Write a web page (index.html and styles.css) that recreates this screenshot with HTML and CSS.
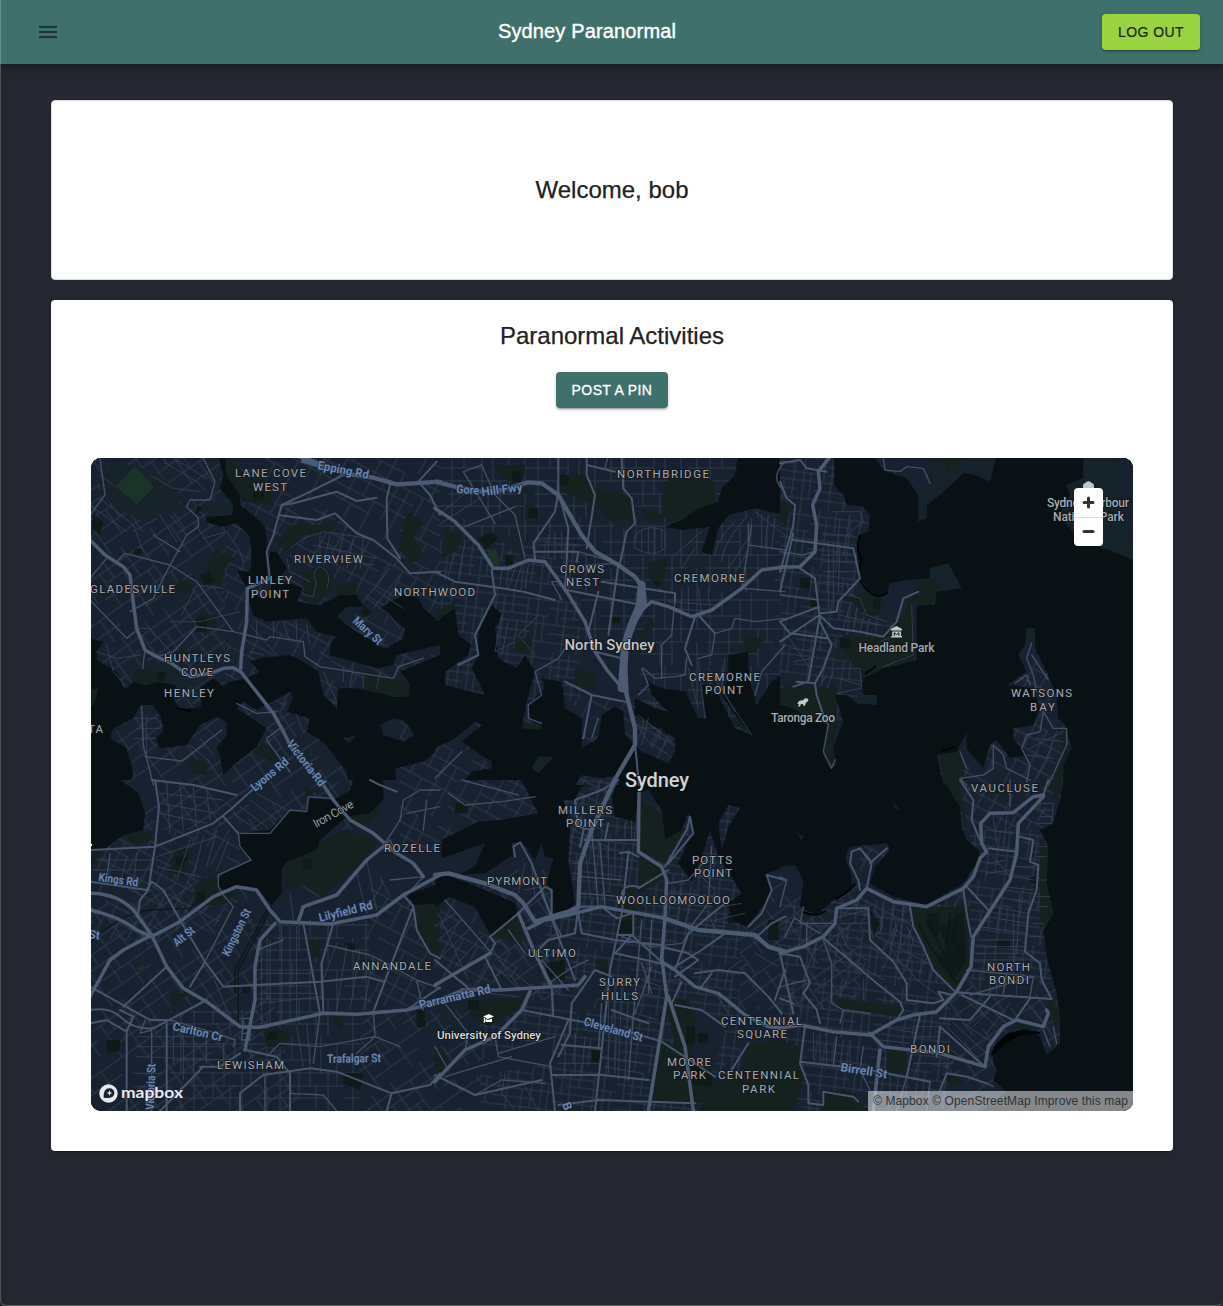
FILE: index.html
```html
<!DOCTYPE html>
<html lang="en">
<head>
<meta charset="utf-8">
<title>Sydney Paranormal</title>
<link rel="stylesheet" href="styles.css">
</head>
<body>
<div class="app">
  <header class="bar">
    <button class="menu" aria-label="menu"><svg width="24" height="24" viewBox="0 0 24 24"><path d="M3 18h18v-2H3v2zm0-5h18v-2H3v2zm0-7v2h18V6H3z"/></svg></button>
    <div class="title">Sydney Paranormal</div>
    <button class="btn logout">LOG OUT</button>
  </header>
  <main class="content">
    <section class="card welcome"><h1>Welcome, bob</h1></section>
    <section class="card activities">
      <h1>Paranormal Activities</h1>
      <button class="btn post">POST A PIN</button>
      <div class="map">
        <svg class="tiles" width="1042" height="653" viewBox="91 458 1042 653">
          <defs>
            <pattern id="grid-a" width="86" height="74" patternUnits="userSpaceOnUse"><path class="st" d="M0 8H86M0 24H52M0 37H86M18 50H86M0 62H70M9 0V37M22 8V74M34 0V24M41 37V62M52 8V50M63 0V37M70 37V74M79 8V50M9 50V74M58 50V74"/></pattern>
            <pattern id="grid-b" width="86" height="74" patternUnits="userSpaceOnUse" patternTransform="rotate(28)"><path class="st" d="M0 6H64M0 19H86M22 31H86M0 45H86M0 58H50M12 0V19M6 19V45M22 19V58M37 6V45M50 0V31M50 45V74M64 6V58M76 19V74M30 58V74"/></pattern>
            <pattern id="grid-c" width="86" height="74" patternUnits="userSpaceOnUse" patternTransform="rotate(-35)"><path class="st" d="M0 10H86M12 21H86M0 34H60M0 48H86M30 62H86M10 10V48M20 0V21M31 21V74M43 0V34M52 34V62M60 10V48M70 48V74M78 0V34"/></pattern>
            <pattern id="grid-d" width="62" height="58" patternUnits="userSpaceOnUse" patternTransform="rotate(7)"><path class="st" d="M0 7H62M0 15H40M12 23H62M0 31H62M0 40H44M0 49H62M8 0V31M16 7V58M25 0V23M31 31V58M40 7V49M50 0V58M57 23V49"/></pattern>
            <clipPath id="land">
              <path transform="translate(90 455) scale(.33333)" d="M0 0H385L400 60 390 100 430 150 425 180 345 185 350 202 395 215 440 205 480 245 485 300 480 350 440 345 470 400 470 420 490 480 530 500 650 490 680 530 740 545 720 570 720 600 860 640 910 630 920 600 1050 570V600L1000 620 930 650 960 685 955 725 910 725 850 710 800 700 745 700 740 760 700 720 685 650 640 620 600 600 510 610 480 620 510 650 470 670 420 680 400 695 370 670 330 700 335 755 270 765 250 730 260 690 200 680 170 690 130 680 110 700 100 695 80 650 20 615 20 590 40 560 0 550zM405 0H1050V500L1000 460 985 430 940 420 910 435 870 460 945 520 940 550 885 582 800 530 740 485 770 455 820 455 800 420 750 420 690 450 620 440 640 400 600 385 560 380 590 340 560 290 540 290 535 330 545 380 540 420 510 430 485 400 530 370 530 250 525 215 500 190 450 150 450 120 410 60zM150 750H190L215 790 220 830 195 850 210 880 290 870 330 810 380 785 410 800 410 840 380 880 390 900 400 960 430 930 500 875 530 820 440 760 460 740 500 765 600 710 610 730 590 770 660 790 650 830 700 860 770 950 775 990H120L130 950 110 880 60 850 70 820 130 790zM870 810L910 790 940 795 975 840 940 860 880 840zM760 850L800 840 780 865zM920 990L915 940 1000 920 1050 880V990zM0 705L25 700 10 750 0 755z"/>
              <path transform="translate(435 455) scale(.33333)" d="M0 0H910L900 60 860 100 850 140 790 160 740 195 690 215 740 225 825 215 800 290 830 300 850 220 880 180 960 160 1050 180V650L1010 680 965 750 950 700 940 640 940 590 880 600 880 670 860 720 900 780 950 840 900 820 850 720 830 690 800 690 815 790 790 790 750 710 680 700 640 680 650 720 700 770 660 760 600 730 600 780 720 850 720 890 700 925 620 890 570 840 565 770 540 755 500 780 490 850 440 880 440 790 390 760 380 680 320 670 330 700 280 750 290 800 320 810 315 825 260 820 275 740 300 650 270 600 245 640 190 610 180 520 200 480 170 450 130 530 130 600 110 640 150 720 30 690 30 650 100 600 110 570 70 540 60 460 0 500zM0 880L60 850 120 800 140 810 80 860 170 920 170 940 110 950 80 990H0zM290 940L310 905 355 905 310 955zM420 990L440 960 500 970 550 960V990z"/>
              <path transform="translate(780 455) scale(.33333)" d="M0 0H160L165 60 160 90 190 120 200 150 250 155 270 180 265 230 235 240 230 290 240 370 260 400 290 425 320 420 330 385 380 375 450 370 450 340 505 325 545 400 470 410 465 450 410 450 410 615 310 640 250 670 245 690 250 720 290 720 290 750 230 745 200 720 165 720 190 800 160 880 170 930 150 940 130 900 140 810 70 780 40 760 0 750zM280 0H650L630 80 590 60 550 55 480 120 440 150 440 190 415 200 415 120 380 70 310 45zM910 0H1060V315L960 275 900 250 860 210 840 180 870 120 860 90 910 70zM740 520L765 520 765 580 800 650 830 720 835 790 855 810 875 880 850 930 850 990H490L470 900 530 890 560 830 560 880 610 940 630 870 650 855 690 910 740 900 700 850 700 820 760 810 780 760 760 700 680 690 740 650 715 600 735 570z"/>
              <path transform="translate(90 780) scale(.33333)" d="M90 0H790L780 30 730 60 660 55 650 95 600 90 540 150 450 160 445 200 480 240 400 280 380 300 395 330 450 318 500 325 545 375 575 340 575 270 590 245 680 210 690 180 770 110 840 100 880 60 880 0H1036V315L950 345 975 375 1036 372V993H0V210L40 210 100 165 160 150 165 100 145 40z"/>
              <path transform="translate(435 780) scale(.33333)" d="M0 0H260L310 100 200 120 130 125 20 180 20 235 150 190 120 260 80 280 60 295 150 330 240 370 250 400 170 470 120 380 40 350 0 385V993H1040V265L995 280 1010 330 990 370 935 440 890 420 880 370 920 340 850 230 825 150 800 230 770 305 730 250 775 150 760 100 740 150 690 180 680 90 640 30 610 40 600 125 540 110 530 50 550 0 440 20 420 60 385 60 405 140 400 240 420 370 400 390 350 400 350 330 335 310 355 235 330 230 320 190 300 240 260 185 230 190 240 220 150 280 60 285 0 290zM850 130L880 75 915 85 880 140 860 210z"/>
              <path transform="translate(780 780) scale(.33333)" d="M0 260L45 255 70 300 60 380 110 405 160 360 215 330 215 290 195 230 210 200 320 190 330 210 285 260 270 310 340 350 440 375 550 310 590 250 600 215 560 180 545 140 540 80 490 0H850L840 60 820 130 780 150 805 200 800 310 820 400 790 450 800 530 830 640 840 720 840 790 800 825 780 770 740 745 680 760 640 800 640 850 650 870 640 900 680 935 600 993H0zM340 65L360 90 345 85zM50 155L70 170 65 185z"/>
            </clipPath>
          </defs>

          <rect class="water" x="91" y="458" width="1042" height="653"/>
          <g clip-path="url(#land)">
            <rect class="ground" x="91" y="458" width="1042" height="653"/>
            <path fill="url(#grid-c)" d="M91 458H225V705H91zM91 700H360V830H91zM240 870L300 1111H91V900z"/>
            <path fill="url(#grid-b)" d="M225 458H440V705H225zM91 830H240V900L200 940H91zM370 880H480L520 975 400 1010 360 1000zM400 700H620V850H400zM590 700H680V780H590z"/>
            <path fill="url(#grid-a)" d="M440 458H600V540H440zM255 920H370V1010H255zM170 1010H360V1111H170zM580 458H780V640H580zM640 620H780V745H640z"/>
            <path fill="url(#grid-d)" d="M440 540H580V700H440zM780 458H900V720H780zM560 780H740V1111H480V1010L540 990zM780 900H950V1111H780zM970 830H1060V980H970z"/>
            <path fill="url(#grid-c)" d="M360 1010H480V1111H360zM480 870H560V1000H500zM740 880H860V1010H740zM950 980H1065V1111H940z"/>
            <path fill="url(#grid-b)" d="M940 660H1080V830H940zM860 840H970V980H860z"/>
            <!-- bushland, reserves and parks -->
            <g transform="translate(90 455) scale(.33333)">
              <path class="heath" d="M30 60L80 20 200 50 240 90 280 130 240 170 150 195 100 170 30 120zM350 140L430 140 440 200 350 190zM160 620L240 620 330 690 260 700 180 690z"/>
              <path class="park" d="M410 10L470 60 540 80 550 150 460 140 420 80zM375 285L435 310 400 340 400 385 340 395 345 350zM270 370L310 390 290 420 255 400zM600 210L700 210 750 190 720 230 640 240 600 290 560 270zM950 170L1000 200 970 250 1000 300 960 330 930 280zM640 350L700 330 740 380 690 440 640 440zM740 385L800 380 800 420 740 420zM270 580L310 600 240 630zM820 650L960 680 955 725 820 710zM130 640L200 650 190 690 130 680zM520 860L570 910 540 920 490 890zM300 910L350 920 350 960 300 950zM0 700H30V750H0zM320 480L375 480 375 520 320 500z"/>
              <path class="grass" d="M76 95L135 35 160 60 192 95 168 120 142 147 120 128z"/>
              <path class="wood" d="M10 180L40 200 30 240 5 220zM330 360L360 345 370 380 340 390zM140 280L160 285 150 300 130 295zM820 450L845 470 830 485 815 475zM490 110H520V135H490zM320 150L340 165 320 175zM200 650L230 650 220 680 200 675zM320 490H350V530H320z"/>
            </g>
            <g transform="translate(435 455) scale(.33333)">
              <path class="heath" d="M530 130H600V220H540zM200 250L260 230 270 310 210 270zM290 940L310 905 355 905 310 955z"/>
              <path class="park" d="M380 60H440L480 100 590 120 590 190 530 200 480 150 380 110zM690 80L780 50 840 80 840 140 780 180 700 200 680 150zM620 160L680 180 690 210 640 190zM640 320L700 310 680 400 640 370zM270 150H300V190H270zM170 30L270 30 270 60 220 80zM240 550H290V590H240zM420 640L480 660 480 710 420 690zM30 220L90 250 60 290 20 310zM260 810L320 800 320 825 260 825zM160 640L200 650 190 680 160 670zM0 470L60 440 60 480 0 510zM920 780L960 840 900 810zM930 540L990 550 960 590 920 600zM610 540L650 490 660 510 620 560z"/>
              <path class="grass" d="M150 300L180 280 195 320 190 335 170 330z"/>
              <path class="wood" d="M210 300H235V330H210zM655 375L680 385 665 400zM530 485H555V505H530zM130 250L170 230 190 250 150 285zM230 50H260V80H230zM370 60H400V90H370zM280 160H310V190H280z"/>
            </g>
            <g transform="translate(780 455) scale(.33333)">
              <path class="heath" d="M440 10H650L630 80 590 60 550 55 480 120 440 150 440 190 415 200 415 120 440 90zM450 340L505 325 545 400 470 410 465 450 410 450 450 380zM160 580L250 580 250 630 160 610zM240 690L300 720 290 750 230 740zM840 0H1015L1040 160 1060 260V315L900 250 840 180zM735 520H770V570H735z"/>
              <path class="park" d="M410 380L460 370 480 400 450 450 400 440 400 610 310 640 250 670 180 570 190 540 300 550 370 480zM0 700L40 690 120 700 170 690 170 790 160 900 190 940 130 940 120 800 0 760zM200 430L260 410 310 430 300 480 270 490zM480 880L560 820 540 890 560 990H490zM830 800L870 880 840 990 820 970 850 900zM490 10H550L500 55zM0 130L30 160 20 210 0 200z"/>
              <path class="residential" d="M1020 0H1060V260L1020 200zM300 10H455V85L380 50 310 45zM320 385L400 375 340 500 300 490z"/>
              <path class="wood" d="M60 370H90V400H60zM90 440L115 430V455H90zM180 550H210V580H180zM280 430H300V460H280z"/>
            </g>
            <g transform="translate(90 780) scale(.33333)">
              <path class="park" d="M250 210L310 205 280 285 240 280zM390 290L450 320 410 370 320 380 310 340 330 300zM590 250L690 190 760 150 860 180 830 240 750 300 700 350 640 310 580 330zM100 165L160 150 200 180 130 190zM660 480L690 480V530H655zM980 370H1050V530L1010 510 980 440zM520 750L560 740 600 770 570 800 530 800zM240 640L300 640 250 680zM720 700L760 715 750 750zM640 20L680 30 650 50zM770 110L830 100 870 60 870 100 830 130 780 140zM0 220L40 210 20 250 0 260z"/>
              <path class="wood" d="M255 230L290 230 280 260 260 265zM640 240L665 235V265L640 270zM320 340L345 335V365L320 370zM760 880L820 880 810 930 760 910zM535 755H560V780H530zM50 780H90V815H50zM980 690H1005V740H980zM460 620H480V640H455zM770 490H795V510H770z"/>
              <path class="grass" d="M140 565L160 555 160 575z"/>
            </g>
            <g transform="translate(435 780) scale(.33333)">
              <path class="heath" d="M0 640L60 700 90 760 20 720zM630 35L650 80 660 120 630 140z"/>
              <path class="residential" d="M150 190L130 240 40 240 20 235zM440 600L490 570 500 640 440 720 420 690zM740 680L850 710 870 760 830 880 780 870 740 780zM190 820L350 770 350 850 50 900 40 880z"/>
              <path class="park" d="M610 60L650 80 690 110 690 180 750 140 690 250 610 210zM610 230L690 270 680 300 610 340zM555 320H600V460H550zM690 650L760 660 780 700 770 850 830 870 850 910 800 970 640 960 680 780 720 800zM940 790L1050 780V993H790L830 930 920 870zM380 0H430L400 60zM0 800L40 830 20 880 0 870zM200 440L260 460 260 500 220 480zM480 540H520V600L490 570zM170 460L250 400 260 440 200 480zM140 660L270 650 250 690 160 740 100 700z"/>
              <path class="wood" d="M60 70H95V100H60zM550 420H590V460H550zM330 550L390 540 390 600 340 600zM790 760H820V790H790zM880 400H900V430H880zM760 840L830 880 830 920 770 910zM100 660H130V690H100zM470 810H500V850H470z"/>
              <path class="wood" d="M755 740H780V790H755zM1000 420H1030V480H1000z"/>
            </g>
            <g transform="translate(780 780) scale(.33333)">
              <path class="park" d="M395 380L560 380 570 560 520 640 460 570 430 490 395 430zM160 650L280 670 370 680 360 710 170 680zM320 810H380V870L320 890zM0 780L60 800 70 900 40 993H0zM130 930L220 940 260 993H120zM810 640L840 700 830 740 800 700zM490 0H540L560 140 540 80zM800 0H850L830 60zM430 340L480 330 500 370 430 380zM780 180L805 200 820 400 780 450zM640 800L720 730 780 740 700 750zM500 880L550 890 540 920 500 910zM660 0L690 50 640 40z"/>
              <path class="wood" d="M440 400H480L470 470 440 440zM270 390L300 430 280 470zM480 450L550 390 560 540 520 600 470 540 500 500zM650 480H690V505H650zM750 290H770V310H750z"/>
              <path class="grass" d="M750 85L785 55 780 95z"/>
              <path class="sweep" d="M415 430L450 500 500 560 530 610M440 420L480 500 520 570M460 470L490 430M510 400L500 500 540 570M530 400L520 480 555 540"/>
            </g>
          </g>

          <!-- beaches and foreshore -->
          <g class="shore">
            <path d="M861 535Q854 546 862 559Q854 578 867 590Q878 601 888 592"/>
            <path class="bay" d="M992 1055Q1003 1026 1040 1033Q1013 1030 992 1055z"/>
            <path d="M942 751L955 747M836 899Q850 892 855 883M803 912Q815 918 826 911M865 674L876 666M176 708L191 711"/>
          </g>

          <!-- roads, west -->
          <g class="roads" transform="translate(90 455) scale(.33333)">
            <path class="st" d="M240 500L330 500 450 470M275 480L320 390 400 400M140 520L180 520 240 590M20 590L80 610 150 600M50 570L70 650 105 690M480 510L560 600M500 550V500M550 500V550M580 500L600 560M620 505V555M650 510L660 570M480 590L520 600M690 590L720 610M700 650L740 740M760 640V680M790 640L780 690M820 660V700M870 650L860 700M600 280L640 250 700 230 770 240 830 250M590 310L600 350 660 380M640 400Q620 420 670 425L680 380Q660 350 690 335 730 350 710 400M690 240V310M720 240L700 330M760 240L740 330M790 250L770 340M820 250L810 340M670 270L860 310M670 300L850 330M820 440L900 340M850 460L930 360M830 430L900 480 930 520M850 400L940 460M130 790H200M140 820H210M130 850H200M170 780V900M300 870L360 920M330 850L370 900M350 820L390 860M590 740L570 770M620 780L640 830M0 150L110 230M30 130L130 210 160 290M180 60L250 100 330 110M220 20L320 80 350 110M250 10L350 70M70 90L30 60M340 250L410 230 450 290 460 320M240 180L290 240M210 180L260 260M130 230L200 190"/>
            <path class="r3" d="M30 10L45 120 0 180M340 10L375 80 360 135 300 135 290 155 325 190 325 215 290 240 230 350 190 430 120 470M190 240L270 290M105 295L240 330 320 380 430 530 320 515 250 590 200 605M430 530L530 555 540 545 640 560 645 605 690 635 910 670 925 635 1000 610M0 435L110 550 135 530M0 370L50 310M165 585L158 640M155 755L160 870 190 990M165 905L275 918 395 825M530 850L570 820M530 855L600 950M440 745L500 775 560 770M105 295L80 320 40 300"/>
            <path class="r2" d="M540 370L530 290 550 240 575 150 650 115 760 60M575 150L610 145 740 110 800 138 860 128M565 180L680 195 735 175 800 235 850 255 920 310 960 355 1050 350M900 90L890 130 892 250 930 310M1050 180L1020 120 985 80 1040 20"/>
            <path class="r1" d="M0 255L45 300 100 335 120 360 132 460 140 520 165 585 200 605 245 625 300 665 360 655 400 640 430 638 452 650 550 775 575 820 605 880 700 990"/>
            <path class="r1 motorway" d="M630 5L700 30 760 55 850 68 920 88 970 85 1050 80M640 18L730 45"/>
            <path class="r1" d="M452 640L455 590 470 500 472 400 540 370"/>
          </g>
          <!-- roads, north -->
          <g class="roads" transform="translate(435 455) scale(.33333)">
            <path class="st" d="M600 240Q640 200 690 230V280Q650 310 600 280zM620 230V290M640 220V295M660 220V295M680 220V280M840 300Q840 260 900 200M860 320Q860 270 930 190M880 340L940 250M900 350L940 290M720 300L800 230M740 340L780 280M820 640L870 720 950 840M790 620L810 790M760 640L790 760M870 610L860 700 900 770M700 440L840 450M710 460L830 470M740 400V480M760 395V485M790 400L800 480M820 400V440M610 780L710 860M600 800L640 860 700 900M640 790L620 870M680 820L650 880M200 480L180 590 240 560M220 500L200 600M310 480L250 540 300 600M60 290L40 360M90 260L70 370M240 340L220 400M260 330L240 400M280 330L270 400M200 345L195 390M10 180L110 100M10 210L150 120M340 240V310M360 230V310M380 230V310M310 270H450M310 250H440M960 170L1050 240M980 180V280M1000 180L990 280M1020 190L1010 280"/>
            <path class="r3" d="M85 50L140 30 180 120 240 180 270 310M90 215L240 155M85 50L180 205M940 205V270L1050 285M920 400L1050 410M950 210L920 400M840 535L890 520 900 490 960 500 1050 490M840 535L830 600 790 610M720 430L710 540 680 570 680 670M625 640L660 670 720 665 750 660 755 610M620 640L640 690 610 720M1050 570L980 650 960 720M430 290L550 325 450 330M0 970L80 890M490 790L470 850M300 650L370 610 390 580M300 650L320 720 280 750 280 790 320 805M380 435L350 380 370 380M520 0L510 40M1050 20Q1000 70 1050 110"/>
            <path class="r2" d="M600 865L612 990M555 325L575 230 600 205 590 130 565 100 560 10M550 330L520 540M395 405L620 450M370 0V110L360 170 295 265 300 310M370 110L400 220 390 410M455 0V60L480 120 455 280M455 30L540 50M300 290L430 290 425 320M500 380L720 415 720 440M840 535L790 480M480 590L560 610M780 485L750 580 770 630M170 345L180 420 120 540 130 600 70 630M0 350L60 380 170 395 265 410 360 435M490 410L460 530M390 680L470 720 570 740M470 720L445 850"/>
            <path class="r1 motorway" d="M0 80L60 95 130 110 200 105 280 82 320 85 370 120 440 240 480 290 550 330 600 365 625 400 630 450 600 500 575 560 570 620 575 720 600 820 600 870 530 990"/>
            <path class="r1 wide" d="M620 390L615 450 590 510 570 570 565 640 560 700"/>
            <path class="r1" d="M575 715L520 650 480 590 450 500 395 410 330 320 280 315 220 340 175 340 130 270 60 200 0 160"/>
            <path class="r1" d="M625 460L650 440 700 455 770 485 830 465 920 400 980 345 1050 335"/>
          </g>
          <!-- roads, east -->
          <g class="roads" transform="translate(780 455) scale(.33333)">
            <path class="st" d="M160 170L240 170 250 200 200 240M180 190L170 300M210 180L190 300M130 240H220M130 300H230M130 320H230M130 350H235M130 380L230 390M145 260V460M160 260V460M180 270L175 410M200 380L210 420 240 430 260 480 320 500M180 480L300 510M210 450L190 520M230 460L220 530M250 490L240 530M270 490L260 530M170 640H240L245 700 170 715M175 670L240 690M300 560L350 540M395 450L400 600 310 635M20 540L90 640M40 580L100 590M40 620L95 610M140 660L120 690M160 650L140 700M740 900L820 910M770 850L850 860M750 880L850 830M830 830L800 910M810 900L770 970"/>
            <path class="r3" d="M310 10L315 45 360 50 380 35 430 40 450 85M130 780L145 810 130 890 155 940 165 915M755 565L740 610 760 660 770 710M755 600L805 675M0 290L70 300 100 290M0 420L115 435M705 685L740 660 750 690M790 770L780 830 740 840 725 880 750 930 740 980M790 770L820 820 860 820 860 870 805 990M640 870L640 940 610 960 540 970 560 990M640 870L670 900 680 940 750 975M540 890L560 940"/>
            <path class="r2" d="M0 25L60 15 80 40 140 50M60 340L105 370 118 480 120 500 155 570 130 640 105 685 110 720 130 780M118 480L160 520 240 530 310 545 350 500 370 430 415 410M40 235L0 410M40 255L220 280 240 370 175 440 170 470 120 475M0 500L118 455M0 560L118 480M118 490L85 680 40 695M0 80L20 130 45 150 40 210 0 350M0 500L30 535 140 550M105 685L50 680"/>
            <path class="r1" d="M150 5L115 50 120 100 98 150 110 210 105 290 60 335 0 337"/>
          </g>
          <!-- roads, south-west -->
          <g class="roads" transform="translate(90 780) scale(.33333)">
            <path class="st" d="M210 40L400 60M210 70L380 100M210 100L350 130M230 10L240 160M270 10L280 150M310 20L320 140M350 30L360 120M430 100L500 150M450 80L530 140M480 60L560 120M500 40L590 90M200 230L380 170M200 260L330 290M300 180L260 300M340 170L310 290M380 150L350 260M420 170L380 270M515 490V730M540 480V730M575 440V720M600 440V720M620 440V710M510 540H650M510 580H660M510 640H680M510 670L690 650M740 490L700 600M770 500L740 690M810 510L780 690M850 530L820 690M110 230L90 310M140 220L130 320M20 240H190M10 270H180M600 340L610 420M640 320L690 350M800 280L830 400M830 240L860 390M870 290L900 350M370 590L430 740M620 740L640 860M650 730L660 850M140 770L340 770M140 800H400M140 830L420 840M130 880H220M130 920H220M250 730V850M280 740V900M310 760V870M350 770V850M400 790V850"/>
            <path class="r3" d="M450 160H540L600 90 650 95 655 50 720 55M445 160L450 200 483 240 385 285 385 320 400 345 430 380 345 545M920 220L900 180 880 200M1000 290L900 300M1050 30L990 30 940 60 930 120 885 190M950 100L1050 80M1010 60L1000 150M500 510L580 480M710 495L840 525 890 550 980 600M980 600L1050 625M980 600L1000 690M850 695L855 770 800 820M930 800L855 770 690 800 570 790 540 820M690 700L670 850M600 940L700 945 740 993M525 890V993M460 715H480V780H455zM455 740H480M455 760H480M60 220L50 300M950 345L1000 290M165 720L150 760 185 750V993M240 720L380 760 435 780 430 800"/>
            <path class="rail" d="M0 490Q90 400 180 390L300 385 330 360M545 380L445 570V740M535 380L435 570V640"/>
            <path class="r2" d="M195 0L207 80 195 200 175 330 150 360 145 400M0 210L195 200 370 130 420 90 520 0M0 305L170 330 185 305 220 330 270 420 345 545 400 620 690 605 830 590 880 605M690 700L640 430M700 700L695 550 730 430M850 695L970 380 940 345M970 380L980 450 1020 520 1050 535M0 690Q60 680 90 710 130 750 190 745L350 660M0 620L180 720 240 720M0 730L50 720 110 755 130 710 90 690M230 560L100 680M400 110L445 160M345 545L300 620M185 0L310 15 440 45M230 730V993M110 750V993M330 860H390L450 820M210 993L340 860M465 810L560 830 600 880 600 993M450 993V940L520 885 660 865 740 875 905 940 1020 915 1050 880M905 940L890 993M840 0L870 15 920 35M950 690L1050 622"/>
            <path class="r1" d="M690 0L730 60 780 120 850 160 920 220 970 250 1000 290M0 340Q80 340 130 390L185 465 230 560 280 625 350 665 450 740 510 742 700 700 800 703 950 690 1050 665M0 390Q90 410 140 450L185 470 270 425 370 350 440 320 500 330 540 390 570 425 640 428 720 432 860 405 940 345 1050 285"/>
            <path class="r1" d="M185 465L100 510 60 540 0 650M555 430L510 480 495 560 495 660 465 810M625 425L640 380 740 345 830 240 880 200"/>
          </g>
          <!-- roads, city -->
          <g class="roads" transform="translate(435 780) scale(.33333)">
            <path class="st" d="M10 400L100 600M60 400L0 440M80 420L10 480M110 440L20 530M140 470L60 560M170 550L250 625M190 540L290 620M160 560L130 610M270 250L250 340M290 260L300 350M270 330L320 320M250 290L310 290M410 250H430M410 280H440M450 200L470 380M520 190V300M540 190V300M570 130V180M590 120V180M720 320L700 400M740 320L730 420M780 330L750 430M790 280L840 330 830 370M700 340L850 350M700 370L830 380M840 420L930 400M860 380L920 370M760 430L870 440M820 400L840 450M960 520L1030 560M920 540L880 570 870 620M850 650L880 700M700 600H740M620 560L680 580M620 600L680 620M610 640L670 650M600 700L670 720M500 830L630 850M510 860L620 880M520 620V880M540 610V880M560 620L550 900M580 640L570 890M390 760V890M420 760V890M450 770L440 890M370 850H490M210 880L200 940 240 990M260 900L310 993M160 640L250 650"/>
            <path class="r3" d="M30 360L170 520M40 40L90 75 200 65 300 50M80 0L250 45M470 150L490 380M495 190L510 380M440 290L560 300M440 340L560 350M620 420L600 650 580 900M650 420L640 640M620 550L650 640M560 470L650 500 740 490M700 310L760 300 820 230M830 200L820 370 760 450M460 540L400 570 340 610M320 540L400 630M190 820L360 770M180 770L190 830 350 860M30 890L230 830M120 945L200 900 330 910M0 800L40 870M500 670L490 810M650 560L600 700M220 450L270 520M320 345L380 470M30 670L100 760 90 810M740 490L780 440"/>
            <path class="r2" d="M165 520L180 490 165 470 250 400 330 320 350 330V410M240 230L235 200 255 187 290 250 370 470 420 600M430 380L420 460 340 480 300 520M440 380L410 400M430 380L500 380 545 415 590 400M555 220L580 215 610 230M580 220L560 400 525 570 500 810 480 993M545 465H590L680 545M595 400V465M450 130L435 200M450 180L610 180M520 130L510 180M420 60L500 30 550 0M420 60L430 140 470 150M430 400L440 460 540 480 680 495M540 520L700 555M590 465L540 520M260 690L440 725 600 760 680 785 840 890M400 720L345 850 360 993M480 570L530 590M480 570L410 670 405 760 370 830M200 630L150 530M100 625L0 540M0 885L120 945 320 900M350 885L500 885 640 900M370 975L490 960 780 970M720 675L800 690 870 740M795 625L830 580M740 605L710 670M680 500L760 520 790 540 720 590M530 690L640 730M380 795L500 805M350 620L355 710M610 325L700 270M690 260L755 150 765 110 775 160 700 250M720 570L760 460 870 370M1050 410L1010 430 960 475M940 440L980 400 1010 330 995 285 1050 300M870 460L800 510 720 560M780 580L850 570 930 580 1000 650 1040 700M1020 660L1050 570M940 790L890 870M610 320Q560 310 560 350"/>
            <path class="r1 motorway" d="M0 285L40 280 150 310 240 345 265 370 300 425 400 395 430 380 435 250 470 150 540 0M690 415L790 450 960 465 1000 500 1050 515"/>
            <path class="r1" d="M280 445L330 420 400 405 500 380 690 415 680 530 695 650 640 993M680 545L720 570 780 620 850 640 900 680 930 705 1000 740 1050 745M612 40L610 215 680 260 695 300 690 415M700 650L750 800 775 993M0 665L80 632"/>
            <path class="r1" d="M250 400L300 520 350 620M0 615L165 520M80 630H200L430 615 450 590M0 905L90 810 180 770 260 690 285 635"/>
          </g>
          <!-- roads, eastern beaches -->
          <g class="roads" transform="translate(780 780) scale(.33333)">
            <path class="st" d="M310 380L300 460M340 370L330 460M370 380L360 500M380 440L400 480 380 560 410 600 480 650M340 400L350 450 330 500 370 560M280 390Q330 430 290 465M180 410L260 390M180 430H260M180 450L200 500 260 540M590 480H720M590 500H740M590 520H730M580 540H730M600 440L740 460M620 410L740 430M640 380L740 400M650 350L750 370M670 320L760 330M700 290L760 300M700 260H770M700 400V570M720 340L710 520M660 380L650 450M640 230L690 290M620 250L680 240M620 280L690 270M620 150L700 160M640 110L650 190M680 110L670 200M780 70H820L815 130H775M780 90H820M780 110H815M770 200H800M770 230H800M780 300H800M770 350H810M770 380H800M760 430H790M750 470H780M600 580V640M630 580V640M650 590V640M710 590V650M600 660L680 730M560 660L650 740M660 660L580 740M690 670L620 760M740 670L790 730M100 760V840M120 760V850M140 760V860M190 780L180 860M210 780V860M330 880V990M400 740H480M400 770H480M500 740L590 830M520 730L620 820M550 730L640 790M500 800L540 830M400 850H520M420 830L400 900M310 740L410 760M300 780L390 790M110 490L70 600M140 490L200 560M170 480L230 580M200 600L180 650M250 600V660"/>
            <path class="r3" d="M130 480L155 550 155 670 190 690 180 730M0 620L80 600M45 410L15 470M70 380L60 430 155 430M0 380L20 300 0 290M45 415L120 460M80 430V500M270 700L190 690M560 570L760 590M760 590L750 650M170 770L160 860M250 800L240 870 270 930M570 645L760 590M690 0L690 80M380 890L350 993M450 905L440 993M680 580L670 640M790 750L810 800M820 740L830 790M620 910L640 920"/>
            <path class="r2" d="M240 330L235 300 210 250 215 215 240 205 275 250 260 325M270 250L320 205M240 205L270 240M525 637L815 657 785 600 780 550 735 515 745 400 770 330 775 255 750 245 760 180 720 170M625 205L710 215M390 380L400 440 430 500 460 570 525 635M550 330L560 400 573 470M125 470L220 550 290 610 360 665 370 690 350 720M265 385H175M265 385L270 480 340 545 380 610 380 660 460 670 490 660 475 635 520 645M560 320L625 390M0 520L40 700M0 520L60 530 90 610 70 640 110 690 120 730M0 655L40 670M420 705L380 890M480 740L615 860M480 740L470 830M60 845L270 870 450 905M75 740L60 850 85 915 85 970 130 975 130 935 220 950 235 965M545 645L700 720M630 650L570 720 480 715M750 655L705 720M805 0L790 45M540 0L580 60 575 120 600 180M480 930L500 880 560 890 620 910"/>
            <path class="r1" d="M0 520L70 500 130 470 165 430 170 385 230 360 260 325 340 365 440 380 550 325 580 290 600 235 620 215 605 190 602 130 630 100 700 98 760 50 790 45M790 50L715 130 710 220 690 300 580 470 573 560 530 635 470 695 400 705 350 720 270 765 160 755 60 735 0 745"/>
            <path class="r1" d="M270 760L310 800 480 820 615 860 625 800 670 740 710 720 790 740 805 700 800 690M300 810L280 993"/>
          </g>

          <!-- road names -->
          <g class="street">
            <text transform="translate(317 469) rotate(11)" textLength="52" lengthAdjust="spacingAndGlyphs">Epping Rd</text>
            <text transform="translate(456 493) rotate(4)" textLength="23" lengthAdjust="spacingAndGlyphs">Gore</text><text transform="translate(482 496) rotate(-7)" textLength="41" lengthAdjust="spacingAndGlyphs">Hill Fwy</text>
            <text transform="translate(352 622) rotate(42)" textLength="35" lengthAdjust="spacingAndGlyphs">Mary St</text>
            <text transform="translate(286 744) rotate(52)" textLength="55" lengthAdjust="spacingAndGlyphs">Victoria Rd</text>
            <text transform="translate(255 792) rotate(-40)" textLength="45" lengthAdjust="spacingAndGlyphs">Lyons Rd</text>
            <text transform="translate(98 881) rotate(8)" textLength="40" lengthAdjust="spacingAndGlyphs">Kings Rd</text>
            <text transform="translate(177 947) rotate(-39)" textLength="24" lengthAdjust="spacingAndGlyphs">Alt St</text>
            <text transform="translate(229 957) rotate(-64)" textLength="51" lengthAdjust="spacingAndGlyphs">Kingston St</text>
            <text transform="translate(320 922) rotate(-14)" textLength="55" lengthAdjust="spacingAndGlyphs">Lilyfield Rd</text>
            <text transform="translate(172 1030) rotate(13)" textLength="51" lengthAdjust="spacingAndGlyphs">Carlton Cr</text>
            <text transform="translate(327 1063) rotate(-1)" textLength="54" lengthAdjust="spacingAndGlyphs">Trafalgar St</text>
            <text transform="translate(154 1110) rotate(-88)" textLength="46" lengthAdjust="spacingAndGlyphs">Victoria St</text>
            <text transform="translate(420 1009) rotate(-13)" textLength="73" lengthAdjust="spacingAndGlyphs">Parramatta Rd</text>
            <text transform="translate(583 1025) rotate(16)" textLength="61" lengthAdjust="spacingAndGlyphs">Cleveland St</text>
            <text transform="translate(840 1071) rotate(9)" textLength="47" lengthAdjust="spacingAndGlyphs">Birrell St</text>
            <text transform="translate(88 938) rotate(8)">St</text>
            <text transform="translate(562 1104) rotate(70)">B</text>
          </g>
          <!-- suburbs -->
          <g class="suburb">
            <text x="235" y="477" textLength="71">LANE COVE</text><text x="253" y="491" textLength="34">WEST</text>
            <text x="294" y="563" textLength="69">RIVERVIEW</text>
            <text x="90" y="593" textLength="85">GLADESVILLE</text>
            <text x="248" y="584" textLength="44">LINLEY</text><text x="251" y="598" textLength="38">POINT</text>
            <text x="394" y="596" textLength="81">NORTHWOOD</text>
            <text x="164" y="662" textLength="66">HUNTLEYS</text><text x="181" y="676" textLength="32">COVE</text>
            <text x="164" y="697" textLength="50">HENLEY</text>
            <text x="88" y="733" textLength="15">TA</text>
            <text x="617" y="478" textLength="92">NORTHBRIDGE</text>
            <text x="560" y="573" textLength="44">CROWS</text><text x="566" y="586" textLength="33">NEST</text>
            <text x="674" y="582" textLength="71">CREMORNE</text>
            <text x="689" y="681" textLength="71">CREMORNE</text><text x="705" y="694" textLength="38">POINT</text>
            <text x="1011" y="697" textLength="61">WATSONS</text><text x="1030" y="711" textLength="25">BAY</text>
            <text x="971" y="792" textLength="67">VAUCLUSE</text>
            <text x="558" y="814" textLength="54">MILLERS</text><text x="566" y="827" textLength="38">POINT</text>
            <text x="384" y="852" textLength="56">ROZELLE</text>
            <text x="487" y="885" textLength="60">PYRMONT</text>
            <text x="692" y="864" textLength="40">POTTS</text><text x="694" y="877" textLength="38">POINT</text>
            <text x="616" y="904" textLength="114">WOOLLOOMOOLOO</text>
            <text x="528" y="957" textLength="48">ULTIMO</text>
            <text x="353" y="970" textLength="78">ANNANDALE</text>
            <text x="599" y="986" textLength="41">SURRY</text><text x="601" y="1000" textLength="37">HILLS</text>
            <text x="987" y="971" textLength="43">NORTH</text><text x="989" y="984" textLength="40">BONDI</text>
            <text x="721" y="1025" textLength="81">CENTENNIAL</text><text x="737" y="1038" textLength="50">SQUARE</text>
            <text x="910" y="1053" textLength="40">BONDI</text>
            <text x="667" y="1066" textLength="44">MOORE</text><text x="673" y="1079" textLength="33">PARK</text>
            <text x="718" y="1079" textLength="81">CENTENNIAL</text><text x="742" y="1093" textLength="33">PARK</text>
            <text x="217" y="1069" textLength="67">LEWISHAM</text>
          </g>
          <g class="place">
            <text class="cove" transform="translate(316 828) rotate(-29)" textLength="44">Iron Cove</text>
            <text x="1047" y="507" textLength="82">Sydney Harbour</text><text x="1053" y="521" textLength="71">National Park</text>
            <text x="858.500" y="652" textLength="76">Headland Park</text>
            <text x="771" y="722" textLength="64">Taronga Zoo</text>
            <text class="uni" x="437" y="1039" textLength="104">University of Sydney</text>
            <text class="town" x="564.500" y="650" textLength="90">North Sydney</text>
            <text class="city" x="625" y="787" textLength="64">Sydney</text>
          </g>
          <!-- points of interest -->
          <g class="poi">
            <path d="M891 629L896.500 626 902 629V630.500H891zM892.200 631.500H901V636H902V637.500H891.200V636H892.200z"/>
            <path class="cut" d="M894.300 636V632.700L896.600 634.500 898.900 632.700V636"/>
            <path d="M797.500 704Q798 700.500 801 700.500L803.500 700 804.500 698.500Q807 697.500 808.500 699.500L807.500 701.800 806 702.500 805 705.500 803.500 706 803 704 801 704 800 706.500H798L799 704z"/>
            <path class="white" d="M483 1016.500L489 1014 494 1016.500 488 1019zM485.500 1018.500L488 1020 492 1018.500V1022H485.500zM484 1018H485V1022.500H483.500z"/>
            <path d="M1083 486Q1083 483 1085.500 483 1086 481.300 1088.500 481.300 1091 481.300 1091.500 483 1094 483 1094 486V488H1083z"/>
            <circle class="white" cx="91" cy="845" r="1.2"/>
          </g>
          <!-- mapbox mark -->
          <g class="mark"><circle class="ring" cx="108.500" cy="1093.500" r="9.200"/><path class="hole" d="M103.700 1097.800Q103 1088.200 109.500 1088.200A4.900 4.900 0 0 1 114.400 1093Q114.300 1099.200 103.700 1097.800z"/><path class="ring" d="M109.500 1090L110.300 1092.200 112.500 1093 110.300 1093.800 109.500 1096 108.700 1093.800 106.500 1093 108.700 1092.200z"/><text x="121" y="1098" textLength="62" lengthAdjust="spacingAndGlyphs">mapbox</text></g>
        </svg>
        <div class="zoom">
          <button aria-label="Zoom in"><svg width="29" height="29" viewBox="0 0 29 29"><path d="M10 14.500H19M14.500 10V19"/></svg></button>
          <button aria-label="Zoom out"><svg width="29" height="28" viewBox="0 0 29 28"><path d="M10 13.500H19"/></svg></button>
        </div>
        <div class="credit"><span>© Mapbox</span> <span>© OpenStreetMap</span> <span>Improve this map</span></div>
      </div>
    </section>
  </main>
</div>
</body>
</html>
```
FILE: styles.css
```css
* { box-sizing: border-box; }
body { margin: 0; background: #24272f; font-family: "Liberation Sans", Arial, sans-serif; color: #212121; }
.app { height: 1306px; position: relative; overflow: hidden; }
.app::after { content: ""; position: absolute; inset: 0; border-left: 1px solid rgba(255,255,255,.2); border-bottom: 1px solid rgba(255,255,255,.25); border-radius: 0 0 6px 6px; pointer-events: none; }
.bar { height: 64px; padding: 0 23px 0 24px; display: grid; grid-template-columns: 48px 1fr 98px; align-items: center; background: #40706b; box-shadow: 0 2px 4px -1px rgba(0,0,0,.2), 0 4px 5px rgba(0,0,0,.14), 0 1px 10px rgba(0,0,0,.12); }
.menu { width: 48px; height: 48px; padding: 12px; border: 0; background: none; }
.menu svg { display: block; fill: #203532; }
.title { text-align: center; color: #fff; font-size: 20px; line-height: 32px; letter-spacing: .15px; -webkit-text-stroke: .4px #fff; padding-bottom: 2px; }
.btn { height: 36px; padding: 0 16px; border: 0; border-radius: 4px; font: 14px/24px "Liberation Sans", Arial, sans-serif; letter-spacing: .4px; white-space: nowrap; box-shadow: 0 3px 1px -2px rgba(0,0,0,.2), 0 2px 2px rgba(0,0,0,.14), 0 1px 5px rgba(0,0,0,.12); }
.logout { width: 98px; background: #9ad341; color: #1b2611; -webkit-text-stroke: .2px #1b2611; }
.post { width: 112px; padding: 0; background: #40706b; color: #fff; -webkit-text-stroke: .3px #fff; }
.content { padding: 36px 50px 0 51px; display: flex; flex-direction: column; gap: 20px; }
.card { background: #fff; border-radius: 4px; }
.card h1 { margin: 0; font-size: 24px; line-height: 32px; font-weight: 400; -webkit-text-stroke: .25px #212121; }
.welcome { height: 180px; border: 1px solid #dcdcdc; display: flex; align-items: center; justify-content: center; }
.activities { height: 851px; padding: 20px 40px 40px; display: flex; flex-direction: column; align-items: center; box-shadow: 0 2px 1px -1px rgba(0,0,0,.2), 0 1px 1px rgba(0,0,0,.14), 0 1px 3px rgba(0,0,0,.12); }
.post { margin-top: 20px; }
.map { position: relative; width: 1042px; height: 653px; margin-top: 50px; border-radius: 10px; overflow: hidden; background: #091114; }
.tiles { display: block; }
.water { fill: #091114; }
.ground, .residential { fill: #182130; }
.park { fill: #14211f; }
.heath { fill: #17232a; }
.grass { fill: #1b3427; }
.wood { fill: #0e1918; }
.sweep { fill: none; stroke: #0c1615; stroke-width: 5; }
.roads path { fill: none; stroke: #4c5b71; stroke-linejoin: round; stroke-linecap: round; }
.roads .r1 { stroke-width: 10.500; }
.roads .motorway { stroke-width: 13; }
.roads .wide { stroke-width: 24; }
.roads .r2 { stroke-width: 6; stroke: #47566c; }
.roads .r3 { stroke-width: 4.200; stroke: #424f65; }
.roads .st { stroke-width: 2.400; stroke: #384558; }
.roads .rail { stroke-width: 4; stroke: #0c1519; }
.st { fill: none; stroke: #354153; stroke-width: .75; }
.shore path { fill: none; stroke: #020506; stroke-width: 2; }
.shore .bay { fill: #020506; }
text { font-family: Roboto, "Open Sans", sans-serif; paint-order: stroke; stroke-linejoin: round; }
.suburb text { font-size: 11.500px; fill: #aaabac; stroke: #10161f; stroke-width: 1.500px; }
.street text { font-size: 12px; font-weight: 700; fill: #6a85b0; stroke: #19263a; stroke-width: 1.500px; }
.place text { font-size: 12px; font-weight: 500; fill: #a9acae; stroke: #0b1217; stroke-width: 1.500px; }
.place .cove { font-size: 12px; font-weight: 400; fill: #9a9d9f; }
.place .uni { font-size: 11.500px; fill: #dadcde; }
.place .town { font-size: 15px; fill: #c5c6c7; }
.place .city { font-size: 20px; fill: #d2d3d4; }
.poi path { fill: #c2c8c8; }
.poi .cut { fill: none; stroke: #101a1b; stroke-width: 1; }
.poi .white { fill: #fff; }
.mark .ring { fill: #e9e9eb; }
.mark .hole { fill: #172130; }
.mark text { font-family: Lato, sans-serif; font-size: 15.500px; font-weight: 700; fill: #ececee; stroke: #172130; stroke-width: 1px; }
.zoom { position: absolute; top: 30px; right: 30px; width: 29px; height: 58px; background: #fff; border-radius: 4px; overflow: hidden; }
.zoom button { display: block; width: 29px; height: 29px; padding: 0; border: 0; background: none; }
.zoom button + button { border-top: 1px solid #ddd; }
.zoom svg { display: block; }
.zoom path { fill: none; stroke: #333; stroke-width: 3; stroke-linecap: round; }
.credit { position: absolute; right: 0; bottom: 0; height: 20px; padding: 0 5px; font-size: 12px; line-height: 20px; letter-spacing: .11px; color: #303337; background: rgba(255,255,255,.5); white-space: nowrap; }
```
